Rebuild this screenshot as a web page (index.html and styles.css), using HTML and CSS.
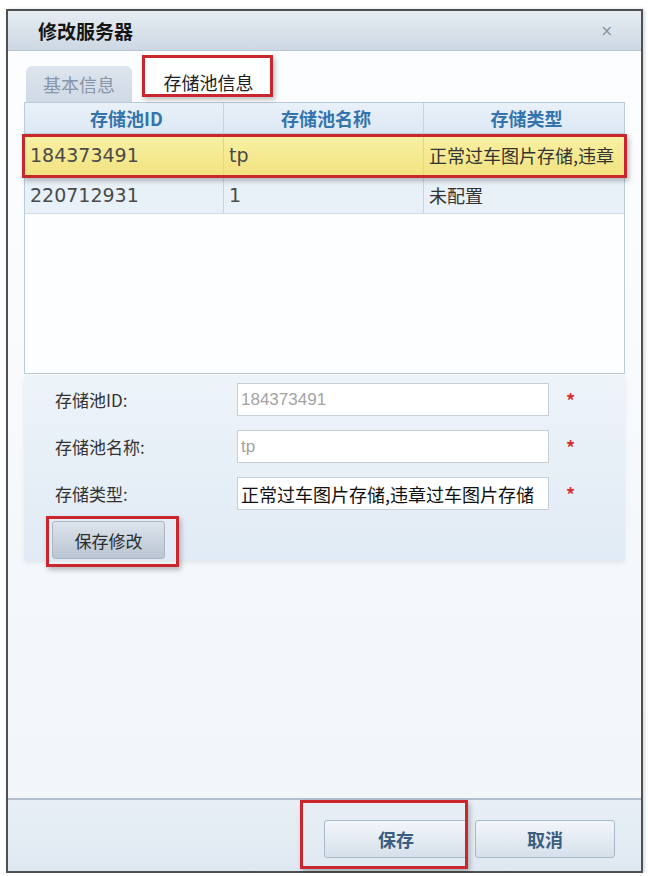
FILE: index.html
```html
<!DOCTYPE html>
<html lang="zh-CN">
<head>
  <meta charset="UTF-8">
  <meta name="viewport" content="width=device-width, initial-scale=1.0">
  <title>修改服务器</title>
  <link rel="stylesheet" href="styles.css">
</head>
<body>
  <div class="dialog">
    <div class="dialog-header">
      <span class="dialog-title">修改服务器</span>
      <span class="dialog-close">×</span>
    </div>

    <div class="dialog-body">
      <div class="tabs">
        <div class="tab">基本信息</div>
        <div class="tab tab-active mark mark-tab">存储池信息</div>
      </div>

      <div class="grid">
        <div class="grid-head">
          <div class="cell">存储池ID</div>
          <div class="cell">存储池名称</div>
          <div class="cell">存储类型</div>
        </div>
        <div class="grid-row selected mark mark-row">
          <div class="cell num">184373491</div>
          <div class="cell num">tp</div>
          <div class="cell">正常过车图片存储,违章</div>
        </div>
        <div class="grid-row">
          <div class="cell num">220712931</div>
          <div class="cell num">1</div>
          <div class="cell">未配置</div>
        </div>
        <div class="grid-empty"></div>
      </div>

      <div class="edit-panel">
        <div class="field">
          <label for="poolId">存储池ID:</label>
          <input type="text" id="poolId" class="dim" value="184373491" readonly>
          <span class="req">*</span>
        </div>
        <div class="field">
          <label for="poolName">存储池名称:</label>
          <input type="text" id="poolName" class="dim" value="tp" readonly>
          <span class="req">*</span>
        </div>
        <div class="field">
          <label for="poolType">存储类型:</label>
          <input type="text" id="poolType" value="正常过车图片存储,违章过车图片存储">
          <span class="req">*</span>
        </div>
        <button class="btn-edit mark mark-edit">保存修改</button>
      </div>
    </div>

    <div class="dialog-footer">
      <button class="btn mark mark-save">保存</button>
      <button class="btn">取消</button>
    </div>
  </div>
</body>
</html>
```

FILE: styles.css
```css
body {
  margin: 0;
  background: #fff;
  font-family: "Noto Sans CJK SC", sans-serif;
}
.dialog {
  box-sizing: border-box;
  width: 637px;
  height: 864px;
  margin: 9px 0 0 6px;
  border: 2px solid #4e5052;
  display: flex;
  flex-direction: column;
  background: #f5f8fb;
  box-shadow: 2px 0 3px rgba(0, 0, 0, 0.15);
}
.dialog-header {
  box-sizing: border-box;
  height: 40px;
  flex: none;
  display: flex;
  align-items: center;
  justify-content: space-between;
  padding: 0 28px 0 30px;
  background: linear-gradient(#e6ecf2, #cdd8e4);
  border-bottom: 1px solid #b9c6d3;
}
.dialog-title {
  font-size: 19px;
  font-weight: bold;
  color: #151515;
}
.dialog-close {
  font-family: "DejaVu Sans", sans-serif;
  font-size: 15px;
  color: #8a95a1;
}
.dialog-body {
  flex: 1;
  display: flex;
  flex-direction: column;
  padding: 0 16px;
  background: linear-gradient(#fcfdfe, #f2f6f9);
}

/* tabs */
.tabs {
  height: 51px;
  flex: none;
  display: flex;
  align-items: flex-end;
  gap: 13px;
  padding-left: 2px;
}
.tab {
  box-sizing: border-box;
  width: 106px;
  height: 36px;
  display: flex;
  align-items: center;
  justify-content: center;
  font-size: 18px;
  color: #8796a8;
  background: linear-gradient(#dde5ee, #cfd9e4);
  border-radius: 6px 6px 0 0;
}
.tab-active {
  width: 127px;
  height: 42px;
  color: #1e1e1e;
  background: #fff;
  padding-top: 1px;
}

/* red callout boxes */
.mark {
  position: relative;
}
.mark::after {
  content: "";
  position: absolute;
  border: 3px solid #c9272d;
  box-shadow: 2px 3px 5px rgba(0, 0, 0, 0.25);
  pointer-events: none;
}
.mark-tab::after {
  top: -5px;
  left: -3px;
  right: -1px;
  bottom: 5px;
}
.mark-row::after {
  top: 0;
  left: -3px;
  right: -3px;
  bottom: -3px;
}
.mark-edit::after {
  top: -6px;
  left: -7px;
  right: -15px;
  bottom: -9px;
}
.mark-save::after {
  top: -21px;
  left: -25px;
  right: -1px;
  bottom: -12px;
}

/* grid */
.grid {
  box-sizing: border-box;
  height: 272px;
  flex: none;
  display: flex;
  flex-direction: column;
  border: 1px solid #b9cbdc;
  background: #fdfeff;
}
.grid-head,
.grid-row {
  display: grid;
  grid-template-columns: 198px 200px 1fr;
}
.grid-head {
  height: 30px;
  background: linear-gradient(#e9f1f9, #dce8f4);
  border-bottom: 1px solid #c3d3e3;
}
.grid-head .cell {
  justify-content: center;
  font-size: 18px;
  font-weight: bold;
  color: #3474ad;
}
.cell {
  display: flex;
  align-items: center;
  padding-left: 5px;
  overflow: hidden;
  white-space: nowrap;
  font-size: 18px;
  color: #333;
}
.cell + .cell {
  border-left: 1px solid #c6d4e2;
}
.num {
  font-family: "DejaVu Sans", "Noto Sans CJK SC", sans-serif;
  font-size: 19px;
  color: #4a4a4a;
}
.grid-row {
  height: 37px;
  background: #e8f0f8;
  border-bottom: 1px solid #cfdbe7;
}
.grid-row.selected {
  height: 41px;
  background: linear-gradient(#f8f1a6, #f2e380);
}
.grid-empty {
  flex: 1;
}

/* edit form */
.edit-panel {
  height: 185px;
  flex: none;
  margin-top: 1px;
  box-sizing: border-box;
  padding: 8px 0 0 31px;
  display: flex;
  flex-direction: column;
  gap: 14px;
  background: linear-gradient(#edf3f9, #e1ebf5);
  box-shadow: 0 3px 4px rgba(170, 185, 200, 0.25);
}
.field {
  display: flex;
  align-items: center;
  height: 33px;
}
.field label {
  width: 182px;
  font-size: 17px;
  color: #333;
}
.field input {
  box-sizing: border-box;
  width: 312px;
  height: 33px;
  padding: 0 3px;
  border: 1px solid #c6ced6;
  background: #fff;
  font-family: "Noto Sans CJK SC", sans-serif;
  font-size: 18px;
  color: #111;
}
.field input.dim {
  font-family: "Liberation Sans", "Noto Sans CJK SC", sans-serif;
  font-size: 17px;
  color: #a3a3a3;
}
.req {
  margin-left: 17px;
  color: #d8312f;
  font-size: 18px;
  font-weight: bold;
}
.btn-edit {
  align-self: flex-start;
  width: 113px;
  height: 38px;
  margin: -3px 0 0 -3px;
  border: 1px solid #aab6c3;
  border-radius: 3px;
  background: linear-gradient(#dde4ec, #b9c5d2);
  font-family: "Noto Sans CJK SC", sans-serif;
  font-size: 17px;
  color: #2c2c2c;
}

/* footer */
.dialog-footer {
  box-sizing: border-box;
  height: 73px;
  flex: none;
  display: flex;
  justify-content: flex-end;
  align-items: flex-start;
  gap: 7px;
  padding: 20px 26px 0 0;
  border-top: 2px solid #b3bfcb;
  background: linear-gradient(#e8eff6, #dfe8f1);
}
.btn {
  width: 144px;
  height: 38px;
  border: 1px solid #a9b9ca;
  border-radius: 3px;
  background: linear-gradient(#f2f6fa, #d6e0ea);
  font-family: "Noto Sans CJK SC", sans-serif;
  font-size: 18px;
  font-weight: bold;
  color: #3b5d80;
}
.btn + .btn {
  width: 140px;
}
```
